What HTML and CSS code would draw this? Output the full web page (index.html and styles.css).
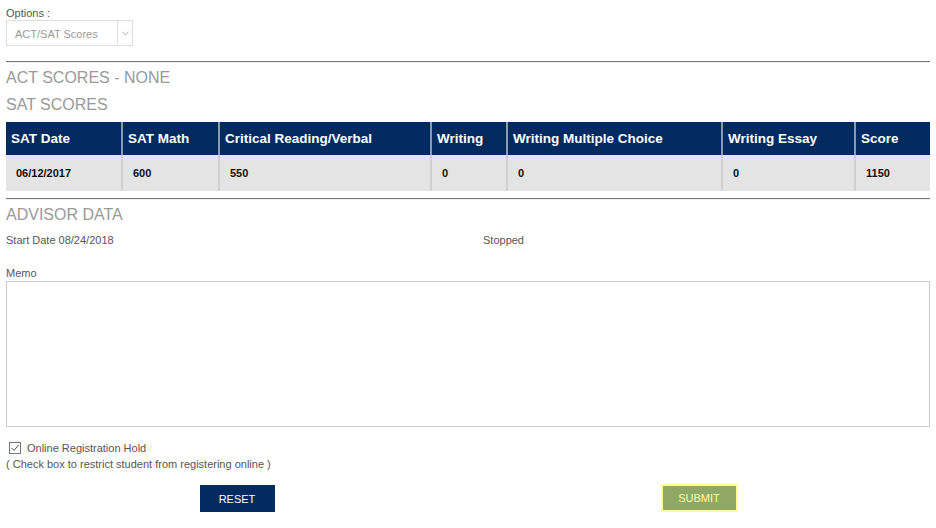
FILE: index.html
```html
<!DOCTYPE html>
<html>
<head>
<meta charset="utf-8">
<link rel="stylesheet" href="styles.css">
</head>
<body>
<div class="page">
  <div class="options">
    <div class="label">Options :</div>
    <div class="select">
      <span class="select-text">ACT/SAT Scores</span>
      <span class="select-arrow"><svg width="7" height="5" viewBox="0 0 7 5"><path d="M0.5 1 L3.5 3.8 L6.5 1" fill="none" stroke="#aaa" stroke-width="1"/></svg></span>
    </div>
  </div>
  <hr class="rule rule-top">
  <h2 class="heading h-act">ACT SCORES - NONE</h2>
  <h2 class="heading h-sat">SAT SCORES</h2>
  <table class="scores">
    <thead>
      <tr>
        <th class="c1">SAT Date</th>
        <th class="c2">SAT Math</th>
        <th class="c3">Critical Reading/Verbal</th>
        <th class="c4">Writing</th>
        <th class="c5">Writing Multiple Choice</th>
        <th class="c6">Writing Essay</th>
        <th class="c7">Score</th>
      </tr>
    </thead>
    <tbody>
      <tr>
        <td>06/12/2017</td>
        <td>600</td>
        <td>550</td>
        <td>0</td>
        <td>0</td>
        <td>0</td>
        <td>1150</td>
      </tr>
    </tbody>
  </table>
  <hr class="rule rule-mid">
  <h2 class="heading h-adv">ADVISOR DATA</h2>
  <div class="advisor-row">
    <div class="adv-col">Start Date 08/24/2018</div>
    <div class="adv-col adv-right">Stopped</div>
  </div>
  <div class="memo-label">Memo</div>
  <textarea class="memo"></textarea>
  <div class="hold">
    <span class="check"><svg width="12" height="12" viewBox="0 0 12 12"><rect x="0.5" y="0.5" width="11" height="11" fill="#fff" stroke="#777"/><path d="M2.5 6 L5 8.5 L9.5 3" fill="none" stroke="#555" stroke-width="1"/></svg></span>
    <span class="hold-text">Online Registration Hold</span>
  </div>
  <div class="hold-note">( Check box to restrict student from registering online )</div>
  <div class="buttons">
    <div class="btn-col"><button class="btn btn-reset">RESET</button></div>
    <div class="btn-col"><button class="btn btn-submit">SUBMIT</button></div>
  </div>
</div>
</body>
</html>
```

FILE: styles.css
```css
* { box-sizing: border-box; }
html, body { margin: 0; padding: 0; background: #fff; }
body { font-family: "Liberation Sans", Arial, sans-serif; color: #555; }
.page { padding: 6px 6px 0 6px; width: 936px; }

.options { height: 48px; padding-top: 1px; }
.label { font-size: 11px; line-height: 13px; color: #555; margin: 0; }
.select {
  margin-top: 0;
  width: 127px; height: 26px;
  border: 1px solid #ddd;
  display: flex; align-items: center;
}
.select-text { flex: 1; font-size: 11px; color: #999; padding-left: 8px; padding-top: 1px; }
.select-arrow {
  width: 15px; height: 24px; border-left: 1px solid #ddd;
  display: flex; align-items: center; justify-content: center;
}

.rule { border: 0; height: 2px; margin: 0; }
.rule-top { border-top: 1px solid #777; border-bottom: 1px solid #eee; margin-top: 7px; }
.rule-mid { border-top: 1px solid #777; border-bottom: 1px solid #eee; margin-top: 7px; }

.heading { font-weight: normal; font-size: 16px; color: #999; margin: 0; line-height: 20px; }
.h-act { margin-top: 5px; }
.h-sat { margin-top: 7px; }
.h-adv { margin-top: 5px; }

.scores { width: 924px; border-collapse: collapse; margin-top: 7px; table-layout: fixed; }
.scores th {
  background: #002a60; color: #fff; font-size: 13.5px; font-weight: bold;
  text-align: left; height: 33px; padding: 0 4px 0 5px;
  border-left: 2px solid #8a9ab3;
}
.scores th:first-child, .scores td:first-child { border-left: 0; }
.scores td {
  background: #e4e4e4; color: #111; font-size: 11px; font-weight: bold;
  height: 36px; padding: 0 10px; border-left: 2px solid #d0d0d0;
}
.scores th:first-child { padding-left: 5px; }
.scores td:first-child { padding-left: 10px; }
.c1 { width: 116px; }
.c2 { width: 97px; }
.c3 { width: 212px; }
.c4 { width: 76px; }
.c5 { width: 215px; }
.c6 { width: 133px; }
.c7 { width: 75px; }

.advisor-row { display: grid; grid-template-columns: 462px 462px; margin-top: 9px; font-size: 11px; line-height: 13px; color: #555; }
.adv-right { padding-left: 15px; }

.memo-label { font-size: 11px; line-height: 13px; color: #555; margin-top: 20px; }
.memo {
  display: block; width: 924px; height: 146px; margin-top: 1px;
  border: 1px solid #ccc; resize: none; background: #fff;
}

.hold { display: flex; align-items: center; margin-top: 14px; padding-left: 3px; height: 14px; }
.check { display: inline-flex; width: 12px; height: 12px; }
.hold-text { font-size: 11px; color: #555; margin-left: 6px; }
.hold-note { font-size: 11px; color: #555; margin-top: 3px; line-height: 13px; }

.buttons { display: grid; grid-template-columns: 462px 462px; margin-top: 14px; }
.btn-col { display: flex; justify-content: center; }
.btn {
  font-family: "Liberation Sans", Arial, sans-serif; font-size: 11px;
  height: 27px; border: 0; cursor: pointer;
}
.btn-reset { background: #002a60; color: #fff; width: 75px; }
.btn-submit { background: #8fa866; color: #ffffa0; width: 77px; border: 2px solid #ffff99; height: 28px; margin-top: -1px; }
```
